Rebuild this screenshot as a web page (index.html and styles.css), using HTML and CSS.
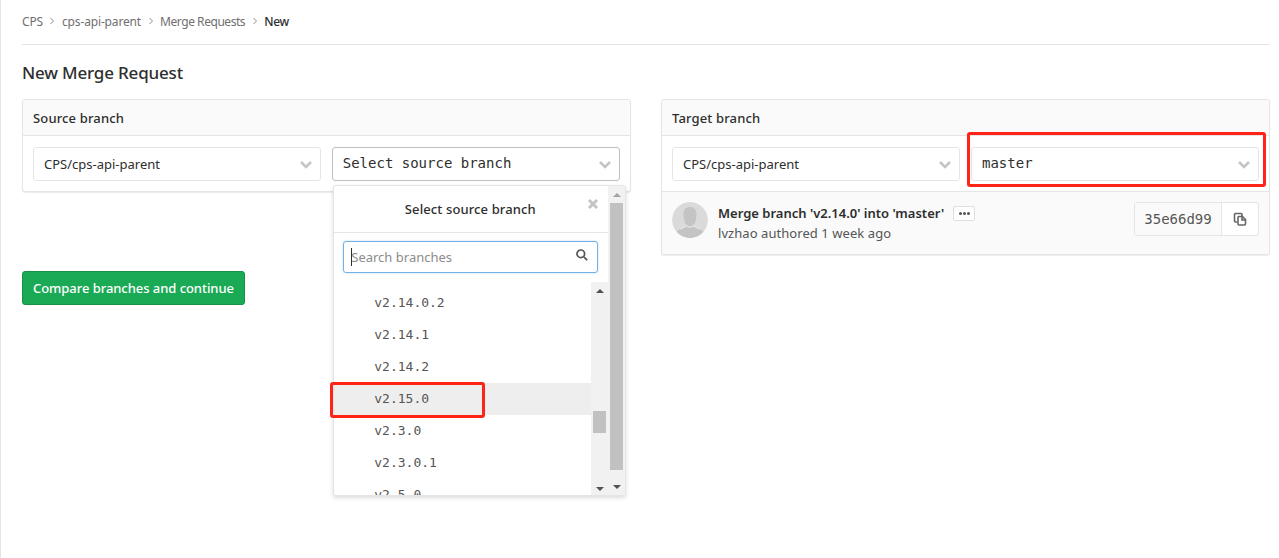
FILE: index.html
```html
<!DOCTYPE html>
<html lang="en">

<head>
    <meta charset="UTF-8">
    <meta name="viewport" content="width=device-width, initial-scale=1.0">
    <title>New Merge Request</title>
    <link rel="stylesheet" href="styles.css">
</head>

<body>

    <div class="content">
        <nav class="breadcrumbs">
            <a>CPS</a>
            <svg class="crumb-sep" viewBox="0 0 6 8"><path d="M1.5 1l3 3-3 3" /></svg>
            <a>cps-api-parent</a>
            <svg class="crumb-sep" viewBox="0 0 6 8"><path d="M1.5 1l3 3-3 3" /></svg>
            <a class="tight">Merge Requests</a>
            <svg class="crumb-sep" viewBox="0 0 6 8"><path d="M1.5 1l3 3-3 3" /></svg>
            <a class="current">New</a>
        </nav>

        <h1>New Merge Request</h1>

        <div class="columns">
            <div class="col">
                <div class="panel">
                    <div class="panel-head">Source branch</div>
                    <div class="panel-body">
                        <div class="select">
                            <span>CPS/cps-api-parent</span>
                            <svg class="chevron" viewBox="0 0 14 10"><path d="M2 2l5 5 5-5" /></svg>
                        </div>
                        <div class="select mono open">
                            <span>Select source branch</span>
                            <svg class="chevron" viewBox="0 0 14 10"><path d="M2 2l5 5 5-5" /></svg>

                            <div class="dropdown">
                                <div class="dropdown-main">
                                    <div class="dropdown-title">
                                        Select source branch
                                        <svg class="close" viewBox="0 0 12 12"><path d="M2 2l8 8M10 2l-8 8" /></svg>
                                    </div>
                                    <div class="search">
                                        <span class="caret"></span>
                                        <span class="search-text">Search branches</span>
                                        <svg class="search-icon" viewBox="0 0 14 14"><circle cx="5.8" cy="5.8" r="3.8" /><path d="M8.8 8.8l3.4 3.4" /></svg>
                                    </div>
                                    <div class="list">
                                        <ul>
                                            <li>v2.14.0.2</li>
                                            <li>v2.14.1</li>
                                            <li>v2.14.2</li>
                                            <li class="active">v2.15.0</li>
                                            <li>v2.3.0</li>
                                            <li>v2.3.0.1</li>
                                            <li>v2.5.0</li>
                                        </ul>
                                        <div class="scrollbar">
                                            <span class="arrow up"></span>
                                            <span class="track"><span class="thumb inner"></span></span>
                                            <span class="arrow down"></span>
                                        </div>
                                    </div>
                                </div>
                                <div class="scrollbar outer">
                                    <span class="arrow up"></span>
                                    <span class="track"><span class="thumb"></span></span>
                                    <span class="arrow down"></span>
                                </div>
                            </div>
                        </div>
                    </div>
                </div>
                <button class="compare" type="button">Compare branches and continue</button>
            </div>

            <div class="col">
                <div class="panel">
                    <div class="panel-head">Target branch</div>
                    <div class="panel-body">
                        <div class="select">
                            <span>CPS/cps-api-parent</span>
                            <svg class="chevron" viewBox="0 0 14 10"><path d="M2 2l5 5 5-5" /></svg>
                        </div>
                        <div class="select mono">
                            <span>master</span>
                            <svg class="chevron" viewBox="0 0 14 10"><path d="M2 2l5 5 5-5" /></svg>
                            <div class="mark mark-target"></div>
                        </div>
                    </div>
                    <div class="commit">
                        <svg class="avatar" viewBox="0 0 36 36">
                            <circle cx="18" cy="18" r="18" fill="#dadada" />
                            <path d="M18 5c-4.500 0-6.500 3-6.500 7 0 4 1 8 2.500 11 .5 1.500-1 2.500-3 3-3 .8-5 2-6.500 4 3 3.500 8.500 6 13.500 6s10.500-2.500 13.500-6c-1.500-2-3.500-3.200-6.500-4-2-.5-3.500-1.500-3-3 1.500-3 2.500-7 2.500-11 0-4-2-7-6.500-7z" fill="#c4c4c4" />
                            <path d="M8 27c3-1 5-1.500 6.500-3.500 1 2.200 6 2.200 7 0C23 25.500 25 26 28 27" fill="none" stroke="#e6e6e6" stroke-width="1.200" />
                        </svg>
                        <div class="commit-info">
                            <div class="commit-title">
                                Merge branch 'v2.14.0' into 'master'
                                <span class="ellipsis"><i></i><i></i><i></i></span>
                            </div>
                            <div class="commit-meta">lvzhao authored 1 week ago</div>
                        </div>
                        <div class="sha-group">
                            <span class="sha">35e66d99</span>
                            <span class="copy">
                                <svg viewBox="0 0 14 14">
                                    <path d="M4 10H2.500a1 1 0 0 1-1-1V2.500a1 1 0 0 1 1-1H8a1 1 0 0 1 1 1V4" />
                                    <path d="M6 4.500h3.500l3 3v4.500a1 1 0 0 1-1 1H6a1 1 0 0 1-1-1V5.500a1 1 0 0 1 1-1z" />
                                    <path d="M9 5v3h3" />
                                </svg>
                            </span>
                        </div>
                    </div>
                </div>
            </div>
        </div>
    </div>

</body>

</html>
```

FILE: styles.css
```css
* {
    margin: 0;
    padding: 0;
    box-sizing: border-box;
}

html,
body {
    height: 100%;
    overflow: hidden;
}

body {
    font-family: "Noto Sans", "Open Sans", sans-serif;
    font-size: 13px;
    background-color: #ffffff;
    color: #2e2e2e;
    border-left: 1px solid #e5e5e5;
}

.content {
    padding: 0 9px 0 21px;
}

/* breadcrumb row */
.breadcrumbs {
    height: 45px;
    padding-bottom: 2px;
    display: flex;
    align-items: center;
    font-size: 12px;
    letter-spacing: -0.15px;
    color: #707070;
    border-bottom: 1px solid #e5e5e5;
}

.crumb-sep {
    width: 6px;
    height: 8px;
    margin: 0 6.5px;
    fill: none;
    stroke: #8c8c8c;
    stroke-width: 1;
}

.tight {
    letter-spacing: -0.45px;
}

.current {
    color: #2e2e2e;
    font-weight: 500;
    letter-spacing: -0.3px;
}

h1 {
    font-size: 17px;
    font-weight: 500;
    letter-spacing: -0.18px;
    line-height: 22px;
    margin: 17px 0 15px;
}

.columns {
    display: flex;
    gap: 30px;
}

.col {
    width: 609px;
}

.panel {
    border: 1px solid #e5e5e5;
    border-radius: 3px;
    background-color: #ffffff;
    box-shadow: 0 1px 1px rgba(0, 0, 0, 0.08);
}

.panel-head {
    height: 36px;
    padding: 0 10px;
    line-height: 37px;
    font-weight: 500;
    letter-spacing: 0.15px;
    background-color: #fafafa;
    border-bottom: 1px solid #e5e5e5;
    border-radius: 3px 3px 0 0;
}

.panel-body {
    display: flex;
    gap: 11px;
    padding: 11px 10px;
    height: 55px;
}

.select {
    position: relative;
    flex: 1;
    height: 34px;
    padding: 0 10px;
    line-height: 33px;
    background-color: #ffffff;
    border: 1px solid #e5e5e5;
    border-radius: 3px;
}

.select.mono {
    font-family: "DejaVu Sans Mono", monospace;
    font-size: 14px;
    line-height: 31px;
}

.select.open {
    padding-left: 9.5px;
    border-color: #c0c0c0;
}

.chevron {
    position: absolute;
    right: 7px;
    top: 12px;
    width: 14px;
    height: 10px;
    fill: none;
    stroke: #c4c4c4;
    stroke-width: 2.5;
}

/* branch dropdown, lies over the page */
.dropdown {
    position: absolute;
    left: 0;
    top: 37px;
    width: 293px;
    height: 311px;
    display: flex;
    font-family: "Noto Sans", "Open Sans", sans-serif;
    font-size: 13px;
    line-height: normal;
    background-color: #ffffff;
    border: 1px solid #e5e5e5;
    border-radius: 3px;
    box-shadow: 0 2px 4px rgba(0, 0, 0, 0.14);
    z-index: 2;
}

.dropdown-main {
    width: 276px;
    display: flex;
    flex-direction: column;
}

.dropdown-title {
    position: relative;
    height: 47px;
    padding-right: 2px;
    line-height: 46px;
    text-align: center;
    font-weight: 500;
    letter-spacing: 0.12px;
    color: #2e2e2e;
    border-bottom: 1px solid #e5e5e5;
}

.close {
    position: absolute;
    right: 9px;
    top: 12px;
    width: 12px;
    height: 12px;
    stroke: #c4c4c4;
    stroke-width: 3;
    fill: none;
}

.search {
    position: relative;
    height: 32px;
    margin: 8px 10px 0 9px;
    padding-left: 7px;
    line-height: 31px;
    border: 1px solid #73b0e8;
    border-radius: 3px;
    box-shadow: 0 0 2px rgba(115, 176, 232, 0.5);
    color: #8c8c8c;
}

.caret {
    position: absolute;
    left: 7px;
    top: 6px;
    width: 1px;
    height: 18px;
    background-color: #2e2e2e;
}

.search-icon {
    position: absolute;
    right: 8px;
    top: 6px;
    width: 14px;
    height: 14px;
    fill: none;
    stroke: #555555;
    stroke-width: 1.7;
}

.list {
    flex: 1;
    display: flex;
    margin-top: 9px;
    min-height: 0;
}

.list ul {
    flex: 1;
    list-style: none;
    margin-left: -4px;
    padding: 5px 0 3px 4px;
    overflow: hidden;
}

.list li {
    height: 32px;
    padding-left: 40px;
    line-height: 32px;
    font-family: "DejaVu Sans Mono", monospace;
    font-size: 13px;
    color: #555555;
}

.list li.active {
    position: relative;
    background-color: #eeeeee;
}

/* red box around the chosen branch */
.list li.active::before {
    content: "";
    box-sizing: border-box;
    position: absolute;
    left: -4px;
    top: -1px;
    width: 155px;
    height: 36px;
    border: 3px solid #ff2318;
    border-radius: 3px;
}

.scrollbar {
    width: 17px;
    display: flex;
    flex-direction: column;
    background-color: #f1f1f1;
}

.scrollbar .track {
    flex: 1;
    position: relative;
    display: block;
}

.scrollbar .arrow {
    height: 17px;
    display: flex;
    align-items: center;
    justify-content: center;
}

.list .arrow.down {
    height: 13px;
}

.arrow::before {
    content: "";
    border-left: 4px solid transparent;
    border-right: 4px solid transparent;
}

.arrow.up::before {
    border-bottom: 4px solid #505050;
}

.arrow.down::before {
    border-top: 4px solid #505050;
}

.scrollbar .thumb {
    position: absolute;
    left: 2px;
    right: 2px;
    top: 0;
    height: 267px;
    background-color: #c1c1c1;
}

.scrollbar .thumb.inner {
    top: 112px;
    height: 22px;
}

.scrollbar.outer .arrow.up::before {
    border-bottom-color: #a3a3a3;
}

/* red box around the target branch */
.mark {
    position: absolute;
    border: 3px solid #ff2318;
    border-radius: 3px;
}

.mark-target {
    left: -5px;
    top: -16px;
    width: 299px;
    height: 55px;
}

.compare {
    display: block;
    width: 223px;
    height: 34px;
    margin-top: 79px;
    padding: 0;
    font-family: inherit;
    font-size: 13px;
    font-weight: 500;
    letter-spacing: -0.05px;
    color: #ffffff;
    background-color: #1aaa55;
    border: 1px solid #168f48;
    border-radius: 3px;
}

/* last commit row on the target side */
.commit {
    display: flex;
    align-items: flex-start;
    height: 63px;
    padding: 10px 10px 0;
    background-color: #fafafa;
    border-top: 1px solid #e5e5e5;
    border-radius: 0 0 3px 3px;
}

.avatar {
    width: 36px;
    height: 36px;
    border-radius: 50%;
    margin-right: 10px;
    flex: none;
}

.commit-info {
    flex: 1;
    margin-top: 1px;
}

.commit-title {
    display: flex;
    align-items: center;
    gap: 9px;
    font-weight: 600;
    color: #2e2e2e;
    line-height: 20px;
}

.commit-meta {
    color: #555555;
    letter-spacing: 0.06px;
    line-height: 21px;
}

.ellipsis {
    display: inline-flex;
    align-items: center;
    justify-content: center;
    gap: 1px;
    width: 22px;
    height: 15px;
    background-color: #ffffff;
    border: 1px solid #dfdfdf;
    border-radius: 2px;
}

.ellipsis i {
    width: 3px;
    height: 3px;
    border-radius: 50%;
    background-color: #555555;
}

.sha-group {
    display: flex;
    height: 34px;
    background-color: #ffffff;
    border: 1px solid #e5e5e5;
    border-radius: 3px;
}

.sha {
    width: 87px;
    line-height: 32px;
    text-align: center;
    font-family: "DejaVu Sans Mono", monospace;
    font-size: 14px;
    color: #555555;
    background-color: #fafafa;
    border-right: 1px solid #e5e5e5;
}

.copy {
    width: 36px;
    display: flex;
    align-items: center;
    justify-content: center;
}

.copy svg {
    width: 14px;
    height: 14px;
    fill: none;
    stroke: #666666;
    stroke-width: 1.6;
}
```
